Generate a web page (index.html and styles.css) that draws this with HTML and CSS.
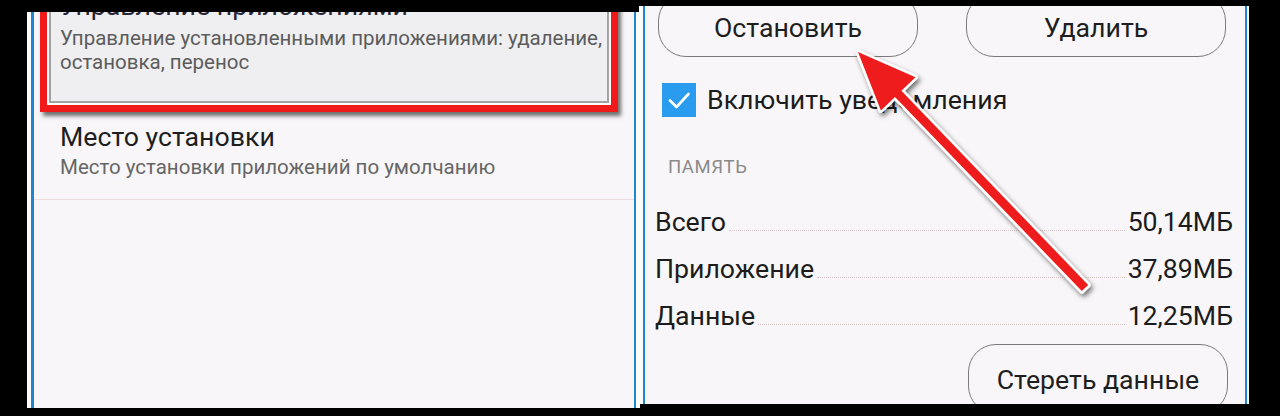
FILE: index.html
```html
<!DOCTYPE html>
<html lang="ru">
<head>
<meta charset="utf-8">
<title>Диспетчер приложений</title>
<link rel="stylesheet" href="styles.css">
</head>
<body>
<div class="stage">
  <section class="panel panel-left">
    <div class="item pressed">
      <div class="item-title">Управление приложениями</div>
      <div class="item-sub">Управление установленными приложениями: удаление, остановка, перенос</div>
    </div>
    <div class="item plain">
      <div class="item-title">Место установки</div>
      <div class="item-sub">Место установки приложений по умолчанию</div>
    </div>
  </section>
  <section class="panel panel-right">
    <div class="btn-row">
      <div class="btn">Остановить</div>
      <div class="btn">Удалить</div>
    </div>
    <div class="check-row">
      <span class="checkbox"><svg viewBox="0 0 34 34" width="34" height="34"><path d="M8 17.5 L14.5 24 L26.5 11" fill="none" stroke="#fff" stroke-width="2.6" stroke-linecap="round" stroke-linejoin="round"/></svg></span>
      <span class="check-label">Включить уведомления</span>
    </div>
    <div class="section-head">ПАМЯТЬ</div>
    <div class="mem-list">
      <div class="mem-row"><span class="mem-label">Всего</span><span class="leader"></span><span class="mem-val">50,14МБ</span></div>
      <div class="mem-row"><span class="mem-label">Приложение</span><span class="leader"></span><span class="mem-val">37,89МБ</span></div>
      <div class="mem-row"><span class="mem-label">Данные</span><span class="leader"></span><span class="mem-val">12,25МБ</span></div>
    </div>
    <div class="clear-row">
      <div class="btn btn-clear">Стереть данные</div>
    </div>
  </section>
  <svg class="arrow" viewBox="0 0 1280 416" width="1280" height="416">
    <defs>
      <filter id="shadow" x="-20%" y="-20%" width="140%" height="140%">
        <feDropShadow dx="2" dy="3" stdDeviation="2.5" flood-color="#000" flood-opacity="0.55"/>
      </filter>
    </defs>
    <polygon filter="url(#shadow)" points="858,52 915.5,77.2 901.4,90.7 1088.2,284.9 1081.8,291.1 895,96.9 880.9,110.4" fill="#ee1c1c" stroke="#fff" stroke-width="5" stroke-linejoin="round" paint-order="stroke"/>
  </svg>
</div>
</body>
</html>
```
FILE: styles.css
```css
* { box-sizing: border-box; }

body {
  margin: 0;
  background: #000;
  width: 1280px;
  height: 416px;
  overflow: hidden;
  font-family: Roboto, "Noto Sans", "Liberation Sans", sans-serif;
  color: #1c1c1c;
}

.stage {
  position: relative;
  display: flex;
  align-items: flex-start;
  padding-left: 31px;
  height: 416px;
}

.panel {
  background: #f8f6f8;
  overflow: hidden;
  border-style: solid;
  border-color: #1f86d4;
  border-width: 0;
}

.panel-left {
  margin-top: 12px;
  height: 396px;
  width: 605px;
  border-left-width: 3px;
  border-right-width: 2px;
  box-shadow: -4px 0 0 #fbfbfb, 4px 0 0 #fbfbfb;
}

.panel-right {
  margin-left: 7px;
  margin-top: 6px;
  height: 398px;
  width: 604px;
  border-left-width: 2px;
  border-right-width: 2px;
  box-shadow: -4px 0 0 #fbfbfb, 2px 0 0 #fbfbfb;
}

/* ---------- left list ---------- */
.item-title {
  font-size: 26.7px;
  line-height: 32px;
  color: #1e1e1e;
  white-space: nowrap;
}

.item-sub {
  font-size: 20.5px;
  line-height: 24px;
  color: #5c5c5c;
}

.pressed {
  margin: -41px 16px 0 6px;
  height: 141px;
  padding: 12px 2px 0 13px;
  border: 7px solid #f01a1a;
  background: #efeef0;
  box-shadow: inset 0 0 0 2px #fdfdfd, inset 0 0 0 4px #a2a2a2, 3px 4px 4px rgba(0, 0, 0, 0.55);
}

.pressed .item-title { color: #262636; }
.pressed .item-sub { margin-top: 4px; }

.plain {
  margin-top: 9px;
  padding: 0 0 20px 26px;
  border-bottom: 1px solid #efdede;
}

.plain .item-sub { margin-top: 2px; color: #666; }

/* ---------- right details ---------- */
.btn-row {
  display: flex;
  gap: 48px;
  margin-top: -13px;
  padding-left: 13px;
}

.btn {
  width: 260px;
  height: 64px;
  border: 1.5px solid #7b7b7b;
  border-radius: 28px;
  display: flex;
  align-items: center;
  justify-content: center;
  padding-top: 6px;
  font-size: 26.7px;
  color: #1e1e1e;
}

.check-row {
  display: flex;
  align-items: center;
  gap: 11px;
  margin-top: 26px;
  padding-left: 17px;
}

.checkbox {
  width: 34px;
  height: 34px;
  background: #2a9cf0;
  display: block;
}

.checkbox svg { display: block; }

.check-label {
  font-size: 26.7px;
  line-height: 34px;
}

.section-head {
  margin-top: 40px;
  padding-left: 23px;
  font-size: 18.5px;
  letter-spacing: 0.6px;
  line-height: 20px;
  color: #8a8a8a;
}

.mem-list {
  margin-top: 22px;
  padding: 0 12px 0 10px;
}

.mem-row {
  display: flex;
  align-items: baseline;
  height: 47px;
  line-height: 47px;
  font-size: 26.7px;
}

.leader {
  flex: 1;
  margin: 0 3px;
  border-bottom: 1.5px dotted #dcc5c5;
}

.clear-row {
  display: flex;
  justify-content: flex-end;
  padding-right: 17px;
  margin-top: 4px;
}

.btn-clear {
  height: 70px;
  align-items: flex-start;
  padding-top: 19px;
  line-height: 32px;
}

/* ---------- annotation ---------- */
.arrow {
  position: absolute;
  left: 0;
  top: 0;
  pointer-events: none;
}
```
